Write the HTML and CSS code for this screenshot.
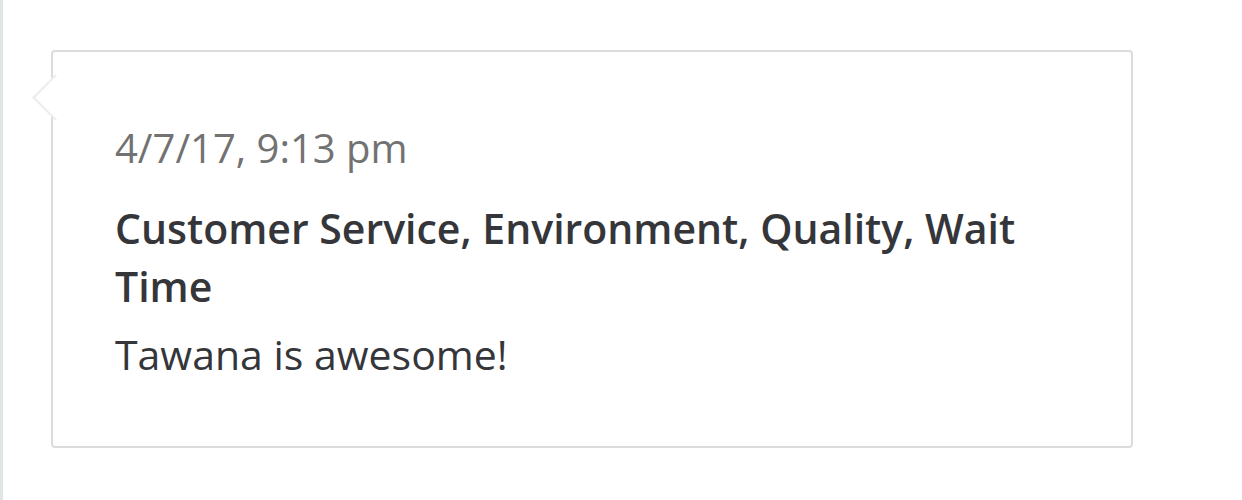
FILE: index.html
```html
<!DOCTYPE html>
<html>
<head>
<meta charset="utf-8">
<link rel="stylesheet" href="styles.css">
</head>
<body>
<div class="rail">
  <div class="card">
    <span class="arrow"></span>
    <div class="date">4/7/17, 9:13 pm</div>
    <div class="tags">Customer Service, Environment, Quality, Wait Time</div>
    <div class="comment">Tawana is awesome!</div>
  </div>
</div>
</body>
</html>
```

FILE: styles.css
```css
html, body {
  margin: 0;
  padding: 0;
  background: #fff;
}
.rail {
  border-left: 3px solid #dfe5e4;
  height: 500px;
  box-sizing: border-box;
  padding: 50px 0 0 48px;
  font-family: "Open Sans", sans-serif;
}
.card {
  position: relative;
  width: 1082px;
  height: 398px;
  box-sizing: border-box;
  border: 2px solid #dcdcdc;
  border-radius: 4px;
  padding: 76px 70px 0 62px;
  background: #fff;
}
.arrow {
  position: absolute;
  left: -14px;
  top: 29px;
  width: 31px;
  height: 31px;
  background: #fff;
  border-left: 2px solid #ececec;
  border-bottom: 2px solid #ececec;
  transform: rotate(45deg);
}
.date {
  font-size: 40px;
  line-height: 40px;
  color: #727272;
}
.tags {
  margin-top: 31px;
  font-size: 41px;
  line-height: 58px;
  font-weight: 600;
  color: #35363a;
}
.comment {
  margin-top: 10px;
  font-size: 41px;
  line-height: 58px;
  color: #35363a;
}
```
